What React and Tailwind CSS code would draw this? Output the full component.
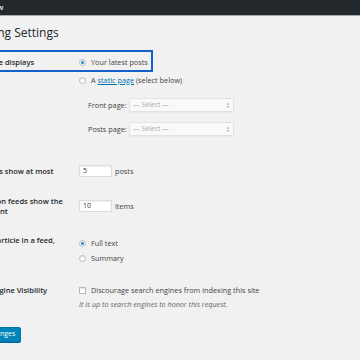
import React from "react";

const font = "font-['Open_Sans',sans-serif]";

function Radio({ checked }) {
  return (
    <span className="inline-flex items-center justify-center w-[7px] h-[7px] rounded-full border border-[#b4b9be] bg-white shadow-[inset_0_1px_1px_rgba(0,0,0,0.1)] shrink-0">
      {checked && <span className="w-[3px] h-[3px] rounded-full bg-[#1e8cbe]" />}
    </span>
  );
}

function Select() {
  return (
    <div className="w-[105px] h-[14px] shrink-0 border border-[#e2e2e2] bg-[#f9f9f9] rounded-[1px] shadow-[0_1px_1px_rgba(0,0,0,0.04)] flex items-center justify-between pl-[3px] pr-[3px]">
      <span className="text-[6.8px] text-[#aaa]">— Select —</span>
      <svg width="4" height="7" viewBox="0 0 4 7">
        <path d="M0.5 2.6 L2 1 L3.5 2.6 Z" fill="#999" />
        <path d="M0.5 4.4 L2 6 L3.5 4.4 Z" fill="#999" />
      </svg>
    </div>
  );
}

function Input({ value }) {
  return (
    <div className="w-[33px] h-[12px] shrink-0 bg-white border border-[#ddd] shadow-[inset_0_1px_2px_rgba(0,0,0,0.07)] flex items-center pl-[3px] text-[7px] text-[#32373c]">
      {value}
    </div>
  );
}

export default function App() {
  const label = "w-[115px] ml-[-1px] shrink-0 font-semibold text-[7.5px] leading-[10px] text-[#23282d] whitespace-nowrap";
  const txt = "text-[7.3px] text-[#444] whitespace-nowrap";
  return (
    <div className={`w-[360px] h-[360px] overflow-hidden bg-[#f1f1f1] ${font}`}>
      <div className="h-[16px] bg-[#23282d] border-b border-[#a7aaad] flex items-center">
        <span className="ml-[-13px] text-[7.5px] font-semibold text-[#eee] leading-none">New</span>
      </div>
      <div className="ml-[-35px]">
        <h1 className="mt-[8px] ml-[1px] h-[18px] leading-[18px] text-[12px] text-[#23282d] whitespace-nowrap">Reading Settings</h1>

        <div className="mt-[8px] ml-[-4px] w-[192px] h-[22px] border-2 border-[#1160cc] pl-[2px] flex items-center pt-[1px]">
          <div className={label}>Front page displays</div>
          <div className="flex items-center gap-[5px] pt-[2px]">
            <Radio checked />
            <span className={txt}>Your latest posts</span>
          </div>
        </div>

        <div className="flex items-center h-[14px] mt-[1px]">
          <div className={label}></div>
          <div className="flex items-center gap-[5px]">
            <Radio />
            <span className={txt}>
              A <span className="text-[#0073aa] underline">static page</span> (select below)
            </span>
          </div>
        </div>

        <div className="flex items-center h-[14px] mt-[11px]">
          <div className={label}></div>
          <span className={`${txt} w-[50px] shrink-0 pl-[9px]`}>Front page:</span>
          <Select />
        </div>
        <div className="flex items-center h-[14px] mt-[10px]">
          <div className={label}></div>
          <span className={`${txt} w-[50px] shrink-0 pl-[9px]`}>Posts page:</span>
          <Select />
        </div>

        <div className="flex items-center h-[12px] mt-[29px]">
          <div className={label}>Blog pages show at most</div>
          <Input value="5" />
          <span className={`${txt} ml-[3px]`}>posts</span>
        </div>

        <div className="flex items-start mt-[19px]">
          <div className={label}>Syndication feeds show the<br />most recent</div>
          <div className="flex items-center pt-[4px]">
            <Input value="10" />
            <span className={`${txt} ml-[3px]`}>items</span>
          </div>
        </div>

        <div className="flex items-start mt-[19px]">
          <div className={label}>For each article in a feed,<br />show</div>
          <div className="flex flex-col pt-[3px] gap-[5px]">
            <div className="flex items-center gap-[5px] h-[10px]">
              <Radio checked />
              <span className={txt}>Full text</span>
            </div>
            <div className="flex items-center gap-[5px] h-[10px]">
              <Radio />
              <span className={txt}>Summary</span>
            </div>
          </div>
        </div>

        <div className="flex items-start mt-[22px]">
          <div className={label}>Search Engine Visibility</div>
          <div className="flex flex-col">
            <div className="flex items-center gap-[5px] h-[10px]">
              <span className="w-[7px] h-[7px] border border-[#b4b9be] bg-white shadow-[inset_0_1px_1px_rgba(0,0,0,0.1)] shrink-0" />
              <span className={txt}>Discourage search engines from indexing this site</span>
            </div>
            <p className="mt-[4px] text-[7.2px] italic text-[#666] whitespace-nowrap leading-[10px]">It is up to search engines to honor this request.</p>
          </div>
        </div>

        <div className="mt-[9px]">
          <button className="h-[15px] pl-[5px] pr-[5px] bg-[#0085ba] border border-[#0073aa] rounded-[2px] text-white text-[6.9px] leading-none whitespace-nowrap shadow-[0_1px_0_#006799]">Save Changes</button>
        </div>
      </div>
    </div>
  );
}
